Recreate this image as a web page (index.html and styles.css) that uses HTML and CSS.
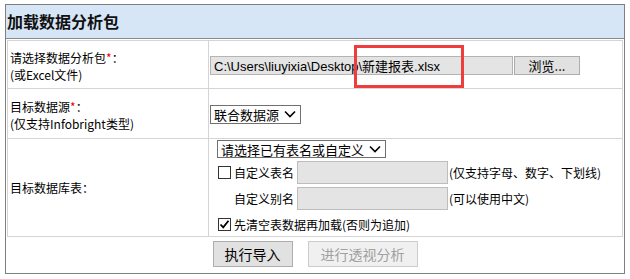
FILE: index.html
```html
<!DOCTYPE HTML>
<html lang="zh-CN">
  <head>
    <meta charset="UTF-8">
    <title>加载数据分析包</title>
    <link rel="stylesheet" href="styles.css">
  </head>
  <body>
    <div class="panel">
      <div class="panel-title">加载数据分析包</div>
      <div class="panel-body">
        <table class="form-table">
          <tr class="row-file">
            <td class="label"><div class="label-text">请选择数据分析包<span class="req">*</span>：<br>(或Excel文件)</div></td>
            <td class="field">
              <span class="file-path">C:\Users\liuyixia\Desktop\新建报表.xlsx</span><button class="btn btn-browse">浏览...</button>
            </td>
          </tr>
          <tr class="row-source">
            <td class="label"><div class="label-text">目标数据源<span class="req">*</span>：<br>(仅支持Infobright类型)</div></td>
            <td class="field">
              <span class="select select-source">联合数据源
                <svg class="chevron" width="12" height="8" viewBox="0 0 12 8"><path d="M1 1.5 L6 6.5 L11 1.5" fill="none" stroke="#000" stroke-width="1.6"/></svg>
              </span>
            </td>
          </tr>
          <tr class="row-table">
            <td class="label">目标数据库表：</td>
            <td class="field field-table">
              <div class="line">
                <span class="select select-table">请选择已有表名或自定义
                  <svg class="chevron" width="12" height="8" viewBox="0 0 12 8"><path d="M1 1.5 L6 6.5 L11 1.5" fill="none" stroke="#000" stroke-width="1.6"/></svg>
                </span>
              </div>
              <div class="line line-input">
                <span class="check"></span><span class="caption">自定义表名</span><span class="text-input"></span><span class="hint">(仅支持字母、数字、下划线)</span>
              </div>
              <div class="line line-input">
                <span class="caption caption-indent">自定义别名</span><span class="text-input"></span><span class="hint">(可以使用中文)</span>
              </div>
              <div class="line">
                <span class="check checked">
                  <svg width="11" height="11" viewBox="0 0 11 11"><path d="M1.5 5.5 L4.2 8.3 L9.5 1.8" fill="none" stroke="#000" stroke-width="1.8"/></svg>
                </span><span class="caption">先清空表数据再加载(否则为追加)</span>
              </div>
            </td>
          </tr>
        </table>
      </div>
      <div class="actions">
        <button class="btn btn-action">执行导入</button>
        <button class="btn btn-action btn-disabled">进行透视分析</button>
      </div>
    </div>
    <div class="mark"></div>
  </body>
</html>
```

FILE: styles.css
```css
html,
body {
  margin: 0;
  padding: 0;
}

body {
  background: #ffffff;
  color: #000;
  font-family: "Noto Sans CJK SC", "Liberation Sans", sans-serif;
  font-size: 12px;
}

/* Панель */
.panel {
  margin: 4px 0 0 5px;
  width: 620px;
  height: 270px;
  box-sizing: border-box;
  border: 1px solid #7f7f7f;
}

.panel-title {
  height: 33px;
  line-height: 33px;
  padding-left: 1px;
  background: #d6e6f6;
  border-bottom: 1px solid #8a8a8a;
  font-size: 16px;
  font-weight: bold;
  color: #111;
}

.panel-body {
  padding: 1px 1px 0;
}

.form-table {
  width: 100%;
  border-collapse: collapse;
  border: 1px solid #cfcfcf;
}

.form-table td {
  border: 1px solid #d4d4d4;
  padding: 0;
  vertical-align: middle;
}

.row-file td {
  height: 47px;
}

.row-source td {
  height: 49px;
}

.row-table td {
  height: 96px;
}

.label {
  width: 198px;
  padding-left: 2px !important;
  line-height: 17px;
}

.label-text {
  padding-top: 3px;
}

.req {
  color: #e00;
}

.field {
  padding-left: 1px !important;
  font-size: 13px;
}

/* Поле файла */
.file-path {
  display: inline-block;
  vertical-align: middle;
  width: 303px;
  height: 19px;
  line-height: 19px;
  box-sizing: border-box;
  padding-left: 3px;
  background: #e4e4e4;
  border: 1px solid #b4b4b4;
  font-family: "Liberation Sans", "Noto Sans CJK SC", sans-serif;
  font-size: 13px;
  white-space: nowrap;
  overflow: hidden;
}

.btn {
  font-family: "Noto Sans CJK SC", "Liberation Sans", sans-serif;
  font-size: 13px;
  color: #000;
  background: #e1e1e1;
  border: 1px solid #adadad;
  padding: 0;
  margin: 0;
}

.btn-browse {
  vertical-align: middle;
  width: 66px;
  height: 19px;
  line-height: 17px;
  margin-left: 1px;
}

/* Выпадающие списки */
.select {
  display: inline-flex;
  align-items: center;
  gap: 5px;
  height: 19px;
  box-sizing: border-box;
  padding: 0 4px 0 3px;
  border: 1px solid #707070;
  background: #fff;
  font-size: 13px;
  vertical-align: middle;
}

.select-table {
  height: 18px;
}

.field-table {
  padding-left: 8px !important;
}

.line {
  display: flex;
  align-items: center;
  height: 23px;
  font-size: 12px;
}

.line:first-child {
  height: 20px;
  margin-bottom: 2px;
}

.line-input {
  margin-bottom: 3px;
}

.check {
  display: inline-flex;
  align-items: center;
  justify-content: center;
  width: 13px;
  height: 13px;
  box-sizing: border-box;
  border: 1px solid #333;
  background: #fff;
  margin: 0 3px 0 1px;
}

.caption {
  margin-right: 3px;
}

.caption-indent {
  margin-left: 17px;
}

.text-input {
  width: 151px;
  height: 23px;
  box-sizing: border-box;
  background: #e4e4e4;
  border: 1px solid #bdbdbd;
}

.hint {
  margin-left: 1px;
}

/* Кнопки */
.actions {
  display: flex;
  justify-content: center;
  gap: 15px;
  padding-top: 4px;
}

.btn-action {
  height: 26px;
  padding: 0 11px;
  font-size: 14px;
}

.btn-disabled {
  color: #a0a0a0;
  background: #f0f0f0;
  border-color: #cccccc;
  padding: 0 12px;
}

/* Отметка */
.mark {
  position: absolute;
  left: 354px;
  top: 45px;
  width: 110px;
  height: 43px;
  box-sizing: border-box;
  border: 3px solid #ef3c3c;
}
```
